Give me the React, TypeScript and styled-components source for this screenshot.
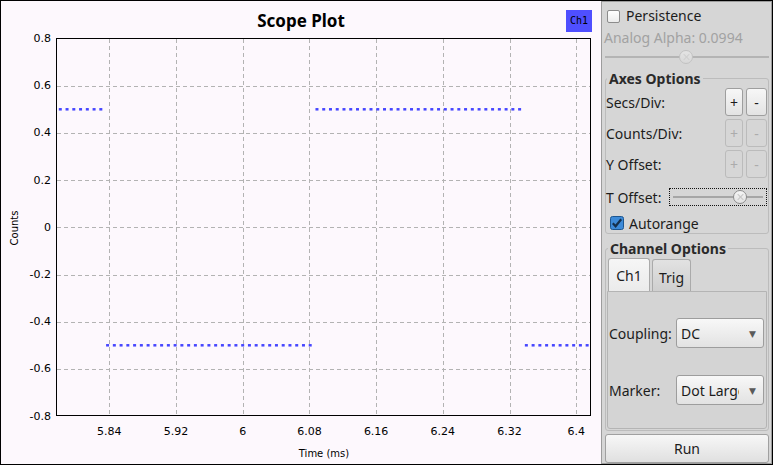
import React from "react";
import styled, { createGlobalStyle } from "styled-components";

const GlobalStyle = createGlobalStyle`
  html, body {
    margin: 0;
    padding: 0;
    background: #fff;
  }
  body {
    font-family: "Noto Sans", "DejaVu Sans", sans-serif;
    color: #1c1c1c;
  }
`;

const X_TICKS = ["5.84", "5.92", "6", "6.08", "6.16", "6.24", "6.32", "6.4"];
const Y_TICKS = [0.8, 0.6, 0.4, 0.2, 0, -0.2, -0.4, -0.6, -0.8];

const PX_PER_MS = 66.71 / 0.08;
const xOf = (t: number) => 108.3 + (t - 5.84) * PX_PER_MS;
const yOf = (v: number) => 0.5 + (0.8 - v) * 236;
const crisp = (n: number) => Math.round(n) + 0.5;

const samples = Array.from({ length: 79 }, (_, k) => ({
  t: 5.78124 + k * 0.0081,
  v: Math.floor((k + 24) / 31) % 2 === 0 ? 0.5 : -0.5,
}));

const fmt = (v: number) => (v === 0 ? "0" : v.toFixed(1));

export default function App() {
  return (
    <>
      <GlobalStyle />
      <Window>
        <PlotPane>
          <PlotHeader>
            <span />
            <PlotTitle>Scope Plot</PlotTitle>
            <Legend>Ch1</Legend>
          </PlotHeader>
          <Chart width={600} height={425}>
            {X_TICKS.map((t) => (
              <line
                key={t}
                x1={crisp(xOf(parseFloat(t)))}
                x2={crisp(xOf(parseFloat(t)))}
                y1={1}
                y2={377}
                stroke="#b3b3b3"
                strokeDasharray="4 3"
                shapeRendering="crispEdges"
              />
            ))}
            {Y_TICKS.slice(1, -1).map((v) => (
              <line
                key={v}
                x1={56}
                x2={589}
                y1={crisp(yOf(v))}
                y2={crisp(yOf(v))}
                stroke="#b3b3b3"
                strokeDasharray="4 3"
                shapeRendering="crispEdges"
              />
            ))}
            {samples.map((s, i) => (
              <rect
                key={i}
                x={xOf(s.t) - 1.5}
                y={yOf(s.v) - 1.25}
                width={3}
                height={2.5}
                fill="#4646ff"
              />
            ))}
            <rect x={55.5} y={0.5} width={534} height={377} fill="none" stroke="#000" shapeRendering="crispEdges" />
            {Y_TICKS.map((v) => (
              <text key={v} x={50} y={yOf(v)} textAnchor="end" dominantBaseline="central">
                {fmt(v)}
              </text>
            ))}
            {X_TICKS.map((t) => (
              <text key={t} x={xOf(parseFloat(t))} y={393} textAnchor="middle" dominantBaseline="central">
                {t}
              </text>
            ))}
            <AxisTitle x={323} y={415} textAnchor="middle" dominantBaseline="central">
              Time (ms)
            </AxisTitle>
            <AxisTitle
              x={13}
              y={190}
              textAnchor="middle"
              dominantBaseline="central"
              transform="rotate(-90 13 190)"
            >
              Counts
            </AxisTitle>
          </Chart>
        </PlotPane>

        <Panel>
          <CheckRow>
            <CheckBox />
            <span>Persistence</span>
          </CheckRow>
          <AlphaLabel>Analog Alpha: 0.0994</AlphaLabel>
          <AlphaSlider>
            <Knob $disabled style={{ left: 74 }} />
          </AlphaSlider>

          <Frame>
            <FrameTitle>Axes Options</FrameTitle>
            <ButtonRow>
              <RowLabel>Secs/Div:</RowLabel>
              <StepButton $narrow>+</StepButton>
              <StepButton>-</StepButton>
            </ButtonRow>
            <ButtonRow>
              <RowLabel>Counts/Div:</RowLabel>
              <StepButton $narrow disabled>+</StepButton>
              <StepButton disabled>-</StepButton>
            </ButtonRow>
            <ButtonRow>
              <RowLabel>Y Offset:</RowLabel>
              <StepButton $narrow disabled>+</StepButton>
              <StepButton disabled>-</StepButton>
            </ButtonRow>
            <OffsetRow>
              <RowLabel>T Offset:</RowLabel>
              <OffsetSlider>
                <Knob style={{ left: 63 }} />
              </OffsetSlider>
            </OffsetRow>
            <AutoRow>
              <CheckedBox viewBox="0 0 14 14" width={14} height={14}>
                <rect x={0.5} y={0.5} width={13} height={13} rx={2} fill="#3d8ad8" stroke="#1d5690" />
                <path d="M2.8 7.2 L5.6 10.2 L11.2 3.2" fill="none" stroke="#15304d" strokeWidth={2.2} />
              </CheckedBox>
              <span>Autorange</span>
            </AutoRow>
          </Frame>

          <Frame $channel>
            <FrameTitle>Channel Options</FrameTitle>
            <TabBar>
              <Tab $active>Ch1</Tab>
              <Tab>Trig</Tab>
            </TabBar>
            <TabPane>
              <ComboRow>
                <RowLabel>Coupling:</RowLabel>
                <Combo>
                  <ComboText>DC</ComboText>
                  <ComboArrow>▼</ComboArrow>
                </Combo>
              </ComboRow>
              <ComboRow>
                <RowLabel>Marker:</RowLabel>
                <Combo>
                  <ComboText>Dot Large</ComboText>
                  <ComboArrow>▼</ComboArrow>
                </Combo>
              </ComboRow>
            </TabPane>
          </Frame>

          <RunButton>Run</RunButton>
        </Panel>
      </Window>
    </>
  );
}

const Window = styled.div`
  display: flex;
  width: 773px;
  height: 465px;
  box-sizing: border-box;
  border: 1px solid #000;
`;

const PlotPane = styled.div`
  width: 600px;
  display: flex;
  flex-direction: column;
  background: #fdf8fd;
`;

const PlotHeader = styled.div`
  height: 37px;
  box-sizing: border-box;
  padding: 8px 9px 0 9px;
  display: grid;
  grid-template-columns: 1fr auto 1fr;
  align-items: start;
`;

const PlotTitle = styled.div`
  font-family: "Noto Sans", sans-serif;
  font-weight: 700;
  font-size: 17px;
  line-height: 24px;
  color: #000;
`;

const Legend = styled.div`
  justify-self: end;
  margin-top: 1px;
  width: 26px;
  height: 22px;
  background: #4f4fff;
  color: #000;
  font-family: "DejaVu Sans Mono", monospace;
  font-size: 10px;
  line-height: 22px;
  text-align: center;
`;

const Chart = styled.svg`
  display: block;
  overflow: visible;
  font-family: "DejaVu Sans", sans-serif;
  font-size: 11px;
  fill: #000;
`;

const AxisTitle = styled.text`
  font-size: 10px;
`;

const Panel = styled.div`
  width: 171px;
  box-sizing: border-box;
  border: 1px solid #9c9c9c;
  background: #d6d6d6;
  padding: 7px 2px 0 3px;
  display: flex;
  flex-direction: column;
  font-size: 14px;
`;

const CheckRow = styled.div`
  display: flex;
  align-items: center;
  gap: 6px;
  height: 14px;
  margin-left: 2px;
  line-height: 14px;
`;

const CheckBox = styled.span`
  width: 13px;
  height: 13px;
  box-sizing: border-box;
  border: 1px solid #8c8c8c;
  border-radius: 2px;
  background: linear-gradient(#ffffff, #ececec);
`;

const AlphaLabel = styled.div`
  margin: 6px 0 0 -1px;
  line-height: 18px;
  color: #a2a2a2;
  white-space: nowrap;
`;

const AlphaSlider = styled.div`
  position: relative;
  height: 14px;
  margin-top: 3px;
  background: linear-gradient(#b4b4b4, #b4b4b4) center / 100% 2px no-repeat;
`;

const OffsetSlider = styled.div`
  position: relative;
  width: 98px;
  height: 18px;
  box-sizing: border-box;
  border: 1px dotted #111;
  background: linear-gradient(#a6a6a6, #a6a6a6) center / calc(100% - 6px) 2px no-repeat;
`;

const Knob = styled.span<{ $disabled?: boolean }>`
  position: absolute;
  top: 50%;
  width: 14px;
  height: 14px;
  margin-top: -7px;
  box-sizing: border-box;
  border-radius: 50%;
  border: 1px solid ${(p) => (p.$disabled ? "#c2c2c2" : "#8e8e8e")};
  background: linear-gradient(${(p) => (p.$disabled ? "#e4e4e4, #d8d8d8" : "#f6f6f6, #e2e2e2")});
  &::before,
  &::after {
    content: "";
    position: absolute;
    left: 50%;
    top: 2px;
    bottom: 2px;
    width: 1px;
    margin-left: -0.5px;
    background: ${(p) => (p.$disabled ? "#cfcfcf" : "#c6c6c6")};
    transform: rotate(45deg);
  }
  &::after {
    transform: rotate(-45deg);
  }
`;

const Frame = styled.fieldset<{ $channel?: boolean }>`
  margin: 5px 0 0 0;
  padding: ${(p) => (p.$channel ? "0 1px 1px 1px" : "0 1px 0 0")};
  min-width: 0;
  border: 1px solid #bcbcbc;
  border-radius: 3px;
`;

const FrameTitle = styled.legend`
  margin-left: 1px;
  padding: 0 2px;
  font-weight: 700;
  font-size: 14px;
  line-height: 19px;
  color: #2a2a2a;
`;

const ButtonRow = styled.div`
  display: flex;
  align-items: center;
  gap: 3px;
  height: 28px;
  margin-bottom: 3px;
`;

const RowLabel = styled.span`
  flex: 1;
  white-space: nowrap;
`;

const StepButton = styled.button<{ $narrow?: boolean }>`
  width: ${(p) => (p.$narrow ? 18 : 21)}px;
  height: 28px;
  padding: 0;
  box-sizing: border-box;
  border: 1px solid #9e9e9e;
  border-radius: 3px;
  background: linear-gradient(#f7f7f7, #e3e3e3);
  font-family: "Noto Sans", sans-serif;
  font-size: 14px;
  color: #1c1c1c;
  &:disabled {
    border-color: #bbbbbb;
    background: #d6d6d6;
    color: #ababab;
  }
`;

const OffsetRow = styled.div`
  display: flex;
  align-items: center;
  height: 32px;
`;

const AutoRow = styled.div`
  display: flex;
  align-items: center;
  gap: 5px;
  height: 20px;
  padding-left: 4px;
`;

const CheckedBox = styled.svg`
  display: block;
`;

const TabBar = styled.div`
  display: flex;
  align-items: flex-end;
  gap: 2px;
  margin-left: 1px;
`;

const Tab = styled.div<{ $active?: boolean }>`
  width: ${(p) => (p.$active ? 42 : 39)}px;
  height: ${(p) => (p.$active ? 33 : 32)}px;
  box-sizing: border-box;
  border: 1px solid #aaaaaa;
  border-bottom: none;
  border-radius: 3px 3px 0 0;
  background: ${(p) =>
    p.$active ? "linear-gradient(#f6f6f6, #ebebeb)" : "linear-gradient(#e2e2e2, #cfcfcf)"};
  display: flex;
  align-items: center;
  justify-content: center;
  padding-top: ${(p) => (p.$active ? 0 : 3)}px;
`;

const TabPane = styled.div`
  height: 138px;
  box-sizing: border-box;
  border: 1px solid #b4b4b4;
  border-radius: 0 0 3px 3px;
  background: #d4d4d4;
  padding: 26px 2px 0 1px;
  display: flex;
  flex-direction: column;
  gap: 27px;
`;

const ComboRow = styled.div`
  display: flex;
  align-items: center;
  height: 30px;
`;

const Combo = styled.div`
  width: 88px;
  height: 30px;
  box-sizing: border-box;
  border: 1px solid #9d9d9d;
  border-radius: 3px;
  background: linear-gradient(#f8f8f8, #e2e2e2);
  display: flex;
  align-items: center;
  padding: 0 7px 0 4px;
`;

const ComboText = styled.span`
  flex: 1;
  max-width: 58px;
  overflow: hidden;
  white-space: nowrap;
`;

const ComboArrow = styled.span`
  margin-left: auto;
  font-size: 9px;
  color: #5a5a5a;
`;

const RunButton = styled.button`
  margin-top: 3px;
  height: 29px;
  box-sizing: border-box;
  border: 1px solid #a0a0a0;
  border-radius: 3px;
  background: linear-gradient(#f7f7f7, #e0e0e0);
  font-family: "Noto Sans", sans-serif;
  font-size: 14px;
  color: #1c1c1c;
`;
